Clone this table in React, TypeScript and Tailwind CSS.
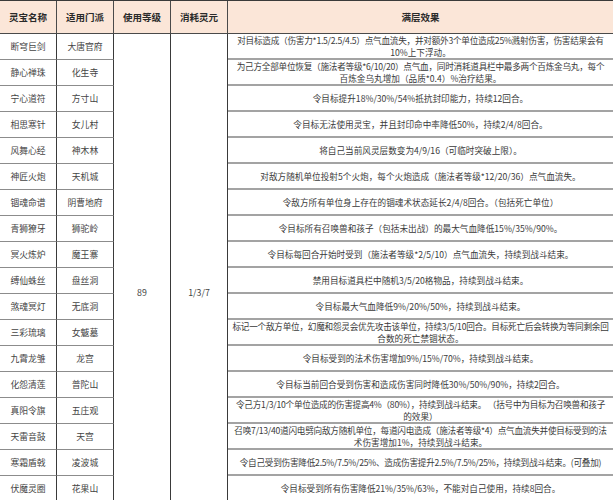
import React from "react";

const rows: [string, string, string[]][] = [
  ["断穹巨剑", "大唐官府", ["对目标造成（伤害力*1.5/2.5/4.5）点气血流失，并对额外3个单位造成25%溅射伤害，伤害结果会有", "10%上下浮动。"]],
  ["静心禅珠", "化生寺", ["为己方全部单位恢复（施法者等级*6/10/20）点气血，同时消耗道具栏中最多两个百炼金乌丸，每个", "百炼金乌丸增加（品质*0.4）%治疗结果。"]],
  ["宁心道符", "方寸山", ["令目标提升18%/30%/54%抵抗封印能力，持续12回合。"]],
  ["相思寒针", "女儿村", ["令目标无法使用灵宝，并且封印命中率降低50%，持续2/4/8回合。"]],
  ["风舞心经", "神木林", ["将自己当前风灵层数变为4/9/16（可临时突破上限）。"]],
  ["神匠火炮", "天机城", ["对敌方随机单位投射5个火炮，每个火炮造成（施法者等级*12/20/36）点气血流失。"]],
  ["锢魂命谱", "阴曹地府", ["令敌方所有单位身上存在的锢魂术状态延长2/4/8回合。（包括死亡单位）"]],
  ["青狮獠牙", "狮驼岭", ["令目标所有召唤兽和孩子（包括未出战）的最大气血降低15%/35%/90%。"]],
  ["冥火炼炉", "魔王寨", ["令目标每回合开始时受到（施法者等级*2/5/10）点气血流失，持续到战斗结束。"]],
  ["缚仙蛛丝", "盘丝洞", ["禁用目标道具栏中随机3/5/20格物品，持续到战斗结束。"]],
  ["煞魂冥灯", "无底洞", ["令目标最大气血降低9%/20%/50%，持续到战斗结束。"]],
  ["三彩琉璃", "女魃墓", ["标记一个敌方单位，幻魔和怨灵会优先攻击该单位，持续3/5/10回合。目标死亡后会转换为等同剩余回", "合数的死亡禁锢状态。"]],
  ["九霄龙雏", "龙宫", ["令目标受到的法术伤害增加9%/15%/70%，持续到战斗结束。"]],
  ["化怨清莲", "普陀山", ["令目标当前回合受到伤害和造成伤害同时降低30%/50%/90%，持续2回合。"]],
  ["真阳令旗", "五庄观", ["令己方1/3/10个单位造成的伤害提高4%（80%），持续到战斗结束。 （括号中为目标为召唤兽和孩子", "的效果）"]],
  ["天雷音鼓", "天宫", ["召唤7/13/40道闪电劈向敌方随机单位，每道闪电造成（施法者等级*4）点气血流失并使目标受到的法", "术伤害增加1%，持续到战斗结束。"]],
  ["寒霜盾戟", "凌波城", ["令自己受到伤害降低2.5%/7.5%/25%、造成伤害提升2.5%/7.5%/25%，持续到战斗结束。(可叠加)"]],
  ["伏魔灵圈", "花果山", ["令目标受到所有伤害降低21%/35%/63%，不能对自己使用，持续8回合。"]],
];

const font = { fontFamily: '"Noto Sans CJK SC", "Noto Sans", sans-serif' };

export default function App() {
  return (
    <div className="w-[613px] h-[500px] overflow-hidden bg-white" style={font}>
      <div className="grid grid-cols-[57px_57px_57px_57px_385px] grid-rows-[33px_repeat(18,26px)] border-t border-[#3a3a3a] text-[#444]">
        {["灵宝名称", "适用门派", "使用等级", "消耗灵元", "满层效果"].map((h, i) => (
          <div
            key={h}
            className={`flex items-center justify-center bg-[#fbe6d8] border-b border-[#4a4a4a] text-[9.5px] font-bold text-[#2a2a2a] ${i < 4 ? "border-r" : ""}`}
          >
            {h}
          </div>
        ))}
        {rows.map(([name, school, effect], i) => (
          <React.Fragment key={name}>
            <div
              className="col-start-1 flex items-center justify-center border-r border-b border-r-[#3a3a3a] border-b-[#8c8c8c] text-[8.8px]"
              style={{ gridRowStart: i + 2 }}
            >
              {name}
            </div>
            <div
              className="col-start-2 flex items-center justify-center border-r border-b border-r-[#3a3a3a] border-b-[#8c8c8c] text-[8.8px]"
              style={{ gridRowStart: i + 2 }}
            >
              {school}
            </div>
            <div
              className="col-start-5 flex flex-col items-center justify-center border-b-2 border-[#a3a3a3] text-[8.65px] leading-[12px] text-[#3a3a3a] whitespace-nowrap"
              style={{ gridRowStart: i + 2 }}
            >
              {effect.map((l) => (
                <span key={l} className={l.length > 47 ? "tracking-[-0.25px]" : ""}>
                  {l}
                </span>
              ))}
            </div>
          </React.Fragment>
        ))}
        <div className="col-start-3 row-start-2 row-span-18 flex justify-center pt-[252px] border-r border-[#3a3a3a] text-[8.8px]">
          89
        </div>
        <div className="col-start-4 row-start-2 row-span-18 flex justify-center pt-[252px] border-r border-[#3a3a3a] text-[8.8px]">
          1/3/7
        </div>
      </div>
    </div>
  );
}
